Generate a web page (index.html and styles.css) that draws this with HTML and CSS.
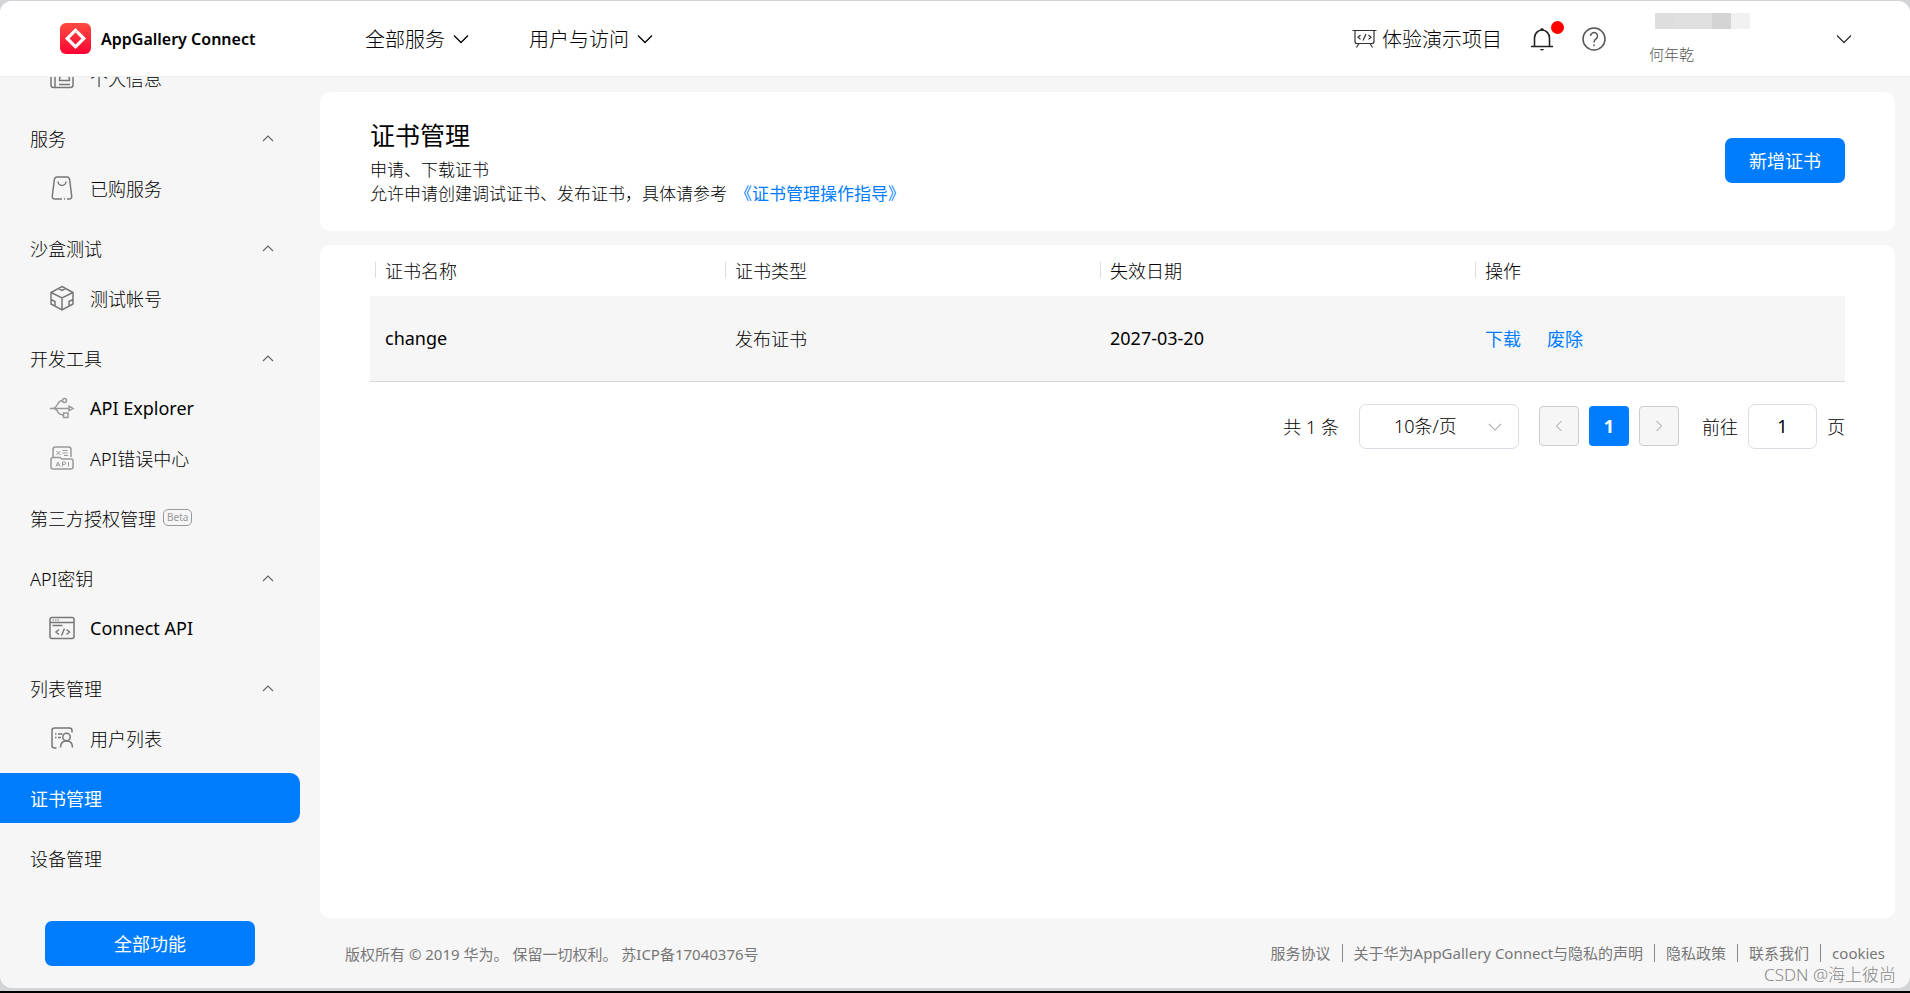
FILE: index.html
```html
<!DOCTYPE html>
<html lang="zh-CN">
<head>
<meta charset="utf-8">
<title>证书管理 - AppGallery Connect</title>
<link rel="stylesheet" href="styles.css">
</head>
<body>
<div class="window">
  <header class="topbar">
    <a class="brand" href="#">
      <svg class="brand-logo" viewBox="0 0 31 31" aria-hidden="true">
        <defs><linearGradient id="lg" x1="0" y1="0" x2="0" y2="1"><stop offset="0" stop-color="#ff4a40"/><stop offset="1" stop-color="#fa0433"/></linearGradient></defs>
        <rect width="31" height="31" rx="6" fill="url(#lg)"/>
        <path d="M15.500 7.200L23.800 15.500L15.500 23.800L7.200 15.500Z" fill="none" stroke="#fff" stroke-width="3.200"/>
        <path d="M15.500 9.500l2.500-2.300" fill="none" stroke="#ffb9bd" stroke-width="1"/>
      </svg>
      <span>AppGallery Connect</span>
    </a>
    <nav class="mainnav">
      <button type="button">全部服务<svg class="chev" viewBox="0 0 16 10"><path d="M1 1.500l7 7 7-7"/></svg></button>
      <button type="button">用户与访问<svg class="chev" viewBox="0 0 16 10"><path d="M1 1.500l7 7 7-7"/></svg></button>
    </nav>
    <div class="tools">
      <a class="demo" href="#">
        <svg class="demo-icon" viewBox="0 0 26 20" aria-hidden="true"><path d="M0.500 1.500h24M3 1.500v11q0 2 2 2h15q2 0 2-2v-11M7 14.500l-2.500 4M18 14.500l2.500 4M8.500 6l-2.500 2.200 2.500 2.200M16.500 6l2.500 2.200-2.500 2.200M14 5l-3 6.500"/></svg>
        <span>体验演示项目</span>
      </a>
      <button class="bell" type="button" aria-label="通知">
        <svg viewBox="0 0 24 24" aria-hidden="true"><path d="M4.500 19.500v-8.500a7.500 8 0 0 1 15 0v8.500M1 19.500h22"/><path class="solid" d="M10 3.500q0-2.500 2-2.500t2 2.500zM10 22h4q-.5 1.500-2 1.500t-2-1.500z"/></svg>
        <i class="dot"></i>
      </button>
      <button class="help" type="button" aria-label="帮助">
        <svg viewBox="0 0 24 24" aria-hidden="true"><circle cx="12" cy="12" r="11"/><path d="M8.500 9a3.500 3.500 0 1 1 5.500 2.900q-2 1.400-2 3.600M12 17.500v1.800"/></svg>
      </button>
      <div class="account">
        <span class="mask"><i></i><i></i><i></i><i></i><i></i></span>
        <span class="account-name">何年乾</span>
      </div>
      <button class="account-more" type="button" aria-label="展开"><svg class="chev" viewBox="0 0 16 10"><path d="M1 1.500l7 7 7-7"/></svg></button>
    </div>
  </header>

  <div class="body">
    <aside class="sidebar">
      <nav class="menu">
        <a class="sub" href="#"><svg class="mi" viewBox="0 0 26 26"><path d="M2 4v16q0 2.500 2.500 2.500h17q2.500 0 2.500-2.500v-16q0-1-1-1h-20q-1 0-1 1M6 3v19.500M10 19.500h11M10.500 15.500v-1a5 5 0 0 1 10 0v1z"/></svg>个人信息</a>
        <button class="group" type="button">服务<svg class="up" viewBox="0 0 12 8"><path d="M1 7l5-5 5 5"/></svg></button>
        <a class="sub" href="#"><svg class="mi" viewBox="0 0 26 26"><path d="M13 24h-7q-3 0-2.700-3l2-16q.3-3 2.700-3h10q2.400 0 2.700 3l2 16q.3 3-2.700 3h-2M15 24h1M9 6.500a4 4 0 0 0 8 0"/></svg>已购服务</a>
        <button class="group" type="button">沙盒测试<svg class="up" viewBox="0 0 12 8"><path d="M1 7l5-5 5 5"/></svg></button>
        <a class="sub" href="#"><svg class="mi" viewBox="0 0 26 26"><path d="M13 1.500l11 6v11.500l-11 6-11-6v-11.500zM2 7.500l11 5.500 11-5.500M13 13v12M9.500 3.500l3.500 2 3.500-2M2 14.500l4 2v4.500M24 14.500l-4 2v4.500"/></svg>测试帐号</a>
        <button class="group" type="button">开发工具<svg class="up" viewBox="0 0 12 8"><path d="M1 7l5-5 5 5"/></svg></button>
        <a class="sub latin" href="#"><svg class="mi light" viewBox="0 0 26 26"><path d="M1 13.500h19M4 13.500q3-1 4.500-4 2-4 5-4M5 13.500q3 1 4 3.500 1.500 3 5.500 3M20 11.200l4 2.300-4 2.300z"/><circle cx="15.500" cy="5.500" r="2"/><rect x="14.500" y="18" width="4.500" height="4.500"/></svg>API Explorer</a>
        <a class="sub" href="#"><svg class="mi light" viewBox="0 0 26 26"><path d="M4 12v-7.500q0-2.500 2.500-2.500h13q2.500 0 2.500 2.500v7.500M4 12.500h7l2 1.500h9.500q1.500 0 1.500 1.500v6.500q0 2-2 2h-18q-2 0-2-2v-7.500q0-2 2-2"/><path class="fine" d="M7.500 6l4 4M11.500 6l-4 4M13.500 5.500h5M13.500 8h5M15 10.500h4M7 21.500l2-4.500 2 4.500M7.800 20h2.400M13.500 21.500v-4.500h2q1.200 0 1.200 1.200t-1.200 1.200h-2M19.500 17v4.500"/></svg>API错误中心</a>
        <a class="group" href="#">第三方授权管理<span class="beta">Beta</span></a>
        <button class="group" type="button">API密钥<svg class="up" viewBox="0 0 12 8"><path d="M1 7l5-5 5 5"/></svg></button>
        <a class="sub latin" href="#"><svg class="mi" viewBox="0 0 26 26"><path d="M1 4.500q0-2 2-2h20q2 0 2 2v17q0 2-2 2h-20q-2 0-2-2zM1 7.500h24M3.500 10.500h10M10 14.500l-3 2.500 3 2.500M17.500 14.500l3 2.500-3 2.500M15.500 13.500l-3 7"/><path class="fine" d="M3.500 5h1.500M6 5h1.500M8.500 5h1.500"/></svg>Connect API</a>
        <button class="group" type="button">列表管理<svg class="up" viewBox="0 0 12 8"><path d="M1 7l5-5 5 5"/></svg></button>
        <a class="sub" href="#"><svg class="mi" viewBox="0 0 26 26"><path d="M7.500 23h-2q-2.500 0-2.500-2.500v-15q0-2.500 2.500-2.500h15q2.500 0 2.500 2.500v2M6 9h1.500M9 9h4.500M6 12.500h1.500M9 12.500h3M11.500 22.500q0-6.500 6-6.500t6 6.500"/><circle cx="17.500" cy="12" r="3.700"/></svg>用户列表</a>
        <a class="group active" href="#" aria-current="page">证书管理</a>
        <a class="group" href="#">设备管理</a>
      </nav>
      <button class="primary all" type="button">全部功能</button>
    </aside>

    <main class="content">
      <section class="card intro">
        <div>
          <h1>证书管理</h1>
          <p>申请、下载证书</p>
          <p>允许申请创建调试证书、发布证书，具体请参考<a class="guide" href="#">《证书管理操作指导》</a></p>
        </div>
        <button class="primary add" type="button">新增证书</button>
      </section>

      <section class="card list">
        <table>
          <thead><tr><th>证书名称</th><th>证书类型</th><th>失效日期</th><th>操作</th></tr></thead>
          <tbody><tr><td class="latin">change</td><td>发布证书</td><td class="latin">2027-03-20</td><td><a class="act" href="#">下载</a><a class="act" href="#">废除</a></td></tr></tbody>
        </table>
        <div class="pager">
          <span class="total">共 1 条</span>
          <span class="size">
            <select aria-label="每页条数"><option>10条/页</option></select>
            <svg class="chev" viewBox="0 0 16 10"><path d="M1 1.500l7 7 7-7"/></svg>
          </span>
          <button class="page" type="button" aria-label="上一页" disabled><svg viewBox="0 0 8 12"><path d="M6.500 1l-5 5 5 5"/></svg></button>
          <button class="page current" type="button">1</button>
          <button class="page" type="button" aria-label="下一页" disabled><svg viewBox="0 0 8 12"><path d="M1.500 1l5 5-5 5"/></svg></button>
          <label class="jump">前往<input class="latin" type="text" value="1">页</label>
        </div>
      </section>

      <footer class="footer">
        <span>版权所有 © 2019 华为。 保留一切权利。 苏ICP备17040376号</span>
        <nav class="legal">
          <a href="#">服务协议</a><a href="#">关于华为AppGallery Connect与隐私的声明</a><a href="#">隐私政策</a><a href="#">联系我们</a><a href="#">cookies</a>
        </nav>
      </footer>
    </main>
  </div>
  <span class="watermark">CSDN @海上彼尚</span>
</div>
</body>
</html>
```

FILE: styles.css
```css
* { box-sizing: border-box; }

body {
  margin: 0;
  height: 100vh;
  background: #d3d4d8;
  border-bottom: 2px solid #000;
  padding: 1px 0 3px;
  font-family: "Noto Sans", "Noto Sans CJK SC", sans-serif;
  font-size: 18px;
  font-weight: 300;
  color: #000;
}

a { color: inherit; text-decoration: none; }
button { border: 0; padding: 0; background: none; font: inherit; color: inherit; }
svg { display: block; flex: none; fill: none; stroke: currentColor; }

.window {
  position: relative;
  display: flex;
  flex-direction: column;
  height: 100%;
  border-radius: 12px;
  overflow: hidden;
  background: #f6f6f6;
}

/* top bar */
.topbar {
  display: flex;
  align-items: center;
  flex: none;
  height: 76px;
  padding: 0 58px 0 60px;
  background: #fff;
  border-bottom: 1px solid #eee;
}
.brand { display: flex; align-items: center; gap: 10px; width: 305px; font-size: 16px; font-weight: 600; color: #000; white-space: nowrap; }
.brand-logo { width: 31px; height: 31px; stroke: none; }
.mainnav { display: flex; gap: 60px; font-size: 20px; }
.mainnav button { display: flex; align-items: center; gap: 8px; }
.chev { width: 16px; height: 10px; stroke-width: 1.300; }
.tools { display: flex; align-items: center; margin-left: auto; }
.demo { display: flex; align-items: center; gap: 4px; font-size: 20px; color: #000; }
.demo-icon { width: 26px; height: 20px; stroke: #333; stroke-width: 1.200; }
.bell { position: relative; margin-left: 28px; color: #222; }
.bell svg { width: 24px; height: 24px; stroke-width: 1.600; }
.bell .solid { fill: currentColor; stroke: none; }
.dot { position: absolute; top: -6px; right: -10px; width: 13px; height: 13px; border-radius: 50%; background: #f00; }
.help { margin-left: 28px; color: #555; }
.help svg { width: 24px; height: 24px; stroke-width: 1.500; }
.account { display: flex; flex-direction: column; gap: 15px; width: 187px; margin-left: 43px; }
.mask { display: flex; margin-left: 6px; }
.mask i { width: 19px; height: 16px; background: #dedede; }
.mask i:nth-child(2), .mask i:nth-child(3) { background: #e0e0e0; }
.mask i:nth-child(4) { background: #d4d4d4; }
.mask i:nth-child(5) { background: #f1f1f1; }
.account-name { font-size: 15px; line-height: 20px; color: #555; }
.account-more { color: #333; }

/* side menu */
.body { display: flex; flex: 1; min-height: 0; }
.sidebar { display: flex; flex-direction: column; flex: none; width: 320px; }
.menu { display: flex; flex-direction: column; flex: 1; justify-content: flex-end; min-height: 0; overflow: hidden; padding-bottom: 38px; }
.menu > * { display: flex; align-items: center; flex: none; width: 300px; height: 50px; padding-bottom: 1px; }
.menu > .group { margin-top: 10px; padding: 0 26px 1px 30px; text-align: left; }
.menu > .sub { gap: 15px; padding-left: 49px; }
.latin { font-weight: 400; }
.mi { width: 26px; height: 26px; stroke: #777; stroke-width: 1.500; }
.mi.light { stroke: #999; }
.mi .fine { stroke-width: 1; }
.up { width: 12px; height: 8px; margin-left: auto; stroke: #666; stroke-width: 1.200; }
.active { background: #007dff; color: #fff; border-radius: 0 10px 10px 0; font-weight: 400; }
.beta { margin-left: 7px; padding: 0 3px; border: 1px solid #999; border-radius: 5px; font-size: 10px; line-height: 15px; font-weight: 400; color: #999; }
.primary { height: 45px; padding-bottom: 2px; border-radius: 7px; background: #007dff; color: #fff; font-size: 18px; font-weight: 400; }
.all { flex: none; width: 210px; margin: 0 0 22px 45px; }

/* content */
.content { display: flex; flex-direction: column; flex: 1; min-width: 0; padding: 15px 15px 0 0; }
.card { background: #fff; border-radius: 10px; }
.intro { display: flex; justify-content: space-between; align-items: center; padding: 23px 50px 25px; }
h1 { margin: 0 0 3px; font-size: 25px; font-weight: 400; line-height: 40px; color: #000; }
.intro p { margin: 0; font-size: 17px; line-height: 24px; }
.guide { margin-left: 8px; color: #007dff; font-weight: 400; }
.add { width: 120px; }
.list { flex: 1; margin-top: 14px; padding: 0 50px; }
table { width: 100%; border-collapse: collapse; table-layout: fixed; }
th { position: relative; height: 51px; padding: 0 15px 2px; font-weight: inherit; text-align: left; }
th:first-child { width: 23.730%; }
th::before { content: ""; position: absolute; left: 5px; top: 17px; height: 16px; border-left: 1px solid #ddd; }
td { height: 85px; padding: 0 15px; background: #f6f6f6; border-bottom: 1px solid #d8d8d8; }
.act { margin-right: 26px; color: #007dff; font-weight: 400; }
.pager { display: flex; align-items: center; justify-content: flex-end; margin-top: 22px; }
.size { position: relative; margin: 0 20px; }
.size select { appearance: none; display: block; width: 160px; height: 45px; padding: 0 60px 0 34px; border: 1px solid #dcdce4; border-radius: 7px; background: #fff; font: inherit; color: inherit; }
.size .chev { position: absolute; right: 17px; top: 18px; width: 14px; color: #aaa; pointer-events: none; }
.page { display: flex; align-items: center; justify-content: center; width: 40px; height: 40px; margin-right: 10px; border: 1px solid #ccc; border-radius: 4px; background: #f6f6f6; color: #999; }
.page svg { width: 8px; height: 12px; }
.current { border: 0; background: #007dff; color: #fff; font-weight: 700; }
.jump { display: flex; align-items: center; gap: 10px; margin-left: 13px; }
.jump input { width: 69px; height: 45px; border: 1px solid #dcdce4; border-radius: 7px; background: #fff; font-family: inherit; font-size: inherit; color: inherit; text-align: center; }

/* footer */
.footer { display: flex; justify-content: space-between; align-items: center; height: 70px; padding: 0 10px 0 25px; font-size: 15px; font-weight: 400; color: #777; }
.legal { display: flex; align-items: center; line-height: 18px; }
.legal a + a { margin-left: 11px; padding-left: 11px; border-left: 1px solid #888; }
.watermark { position: absolute; right: 14px; bottom: 1px; font-size: 17px; line-height: 24px; color: #888; }
```
